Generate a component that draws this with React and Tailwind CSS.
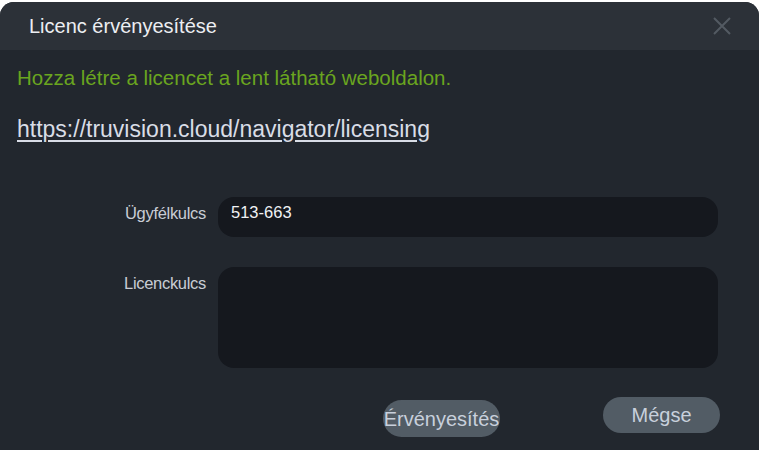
import React from "react";

const font = { fontFamily: '"Liberation Sans", Arial, sans-serif' };

export default function App() {
  return (
    <div className="w-[759px] h-[450px] bg-white pt-[2px] overflow-hidden" style={font}>
      <div className="h-[448px] flex flex-col bg-[#22272e] rounded-t-[14px] overflow-hidden">
        {/* title bar */}
        <div className="h-[48px] shrink-0 bg-[#2c3138] flex items-center justify-between pl-[29px] pr-[27px]">
          <span className="text-[20px] text-[#eceef2] leading-none">Licenc érvényesítése</span>
          <svg width="20" height="20" viewBox="0 0 20 20" className="text-[#535a62]">
            <path d="M2 2L18 18M18 2L2 18" stroke="currentColor" strokeWidth="2" />
          </svg>
        </div>

        <div className="flex-1 flex flex-col pl-[17px]">
          <p className="mt-[16px] text-[20.5px] leading-[24px] text-[#6aa51f]">
            Hozza létre a licencet a lent látható weboldalon.
          </p>
          <a className="mt-[26px] text-[23px] leading-[26px] text-[#d9dde6] underline underline-offset-[3px] self-start">
            https://truvision.cloud/navigator/licensing
          </a>

          <div className="mt-[55px] grid grid-cols-[189px_500px] gap-x-[12px] gap-y-[30px]">
            <label className="text-right text-[16.5px] text-[#c9cdd5] tracking-[-0.3px] pt-[4px]">Ügyfélkulcs</label>
            <div className="h-[40px] rounded-[16px] bg-[#15181e] pl-[13px] pt-[3px] text-[16.5px] text-[#f0f2f5]">
              513-663
            </div>
            <label className="text-right text-[16.5px] text-[#c9cdd5] tracking-[-0.3px] pt-[4px]">Licenckulcs</label>
            <div className="h-[101px] rounded-[16px] bg-[#15181e]" />
          </div>

          <div className="mt-[29px] flex items-start">
            <button className="ml-[366px] mt-[3px] w-[117px] h-[37px] rounded-full bg-[#525c65] text-[20px] text-[#c8d0dc] flex items-center justify-center whitespace-nowrap overflow-visible">
              Érvényesítés
            </button>
            <button className="ml-[103px] w-[117px] h-[36px] rounded-full bg-[#525c65] text-[20px] text-[#c8d0dc] flex items-center justify-center">
              Mégse
            </button>
          </div>
        </div>
      </div>
    </div>
  );
}
